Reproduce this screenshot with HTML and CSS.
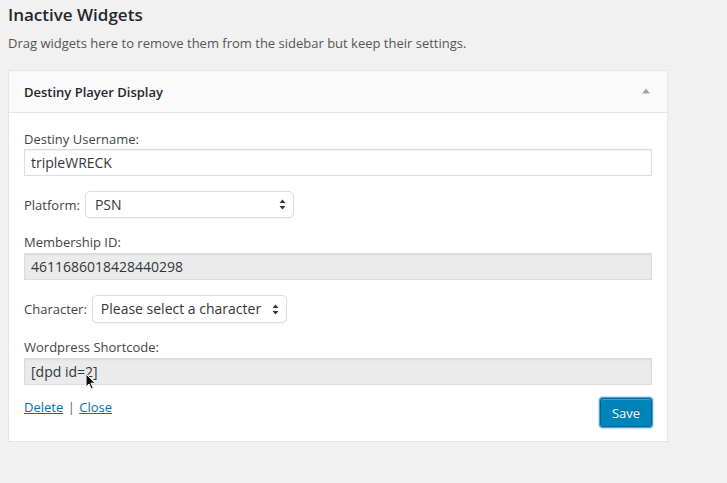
FILE: index.html
```html
<!DOCTYPE html>
<html>
<head>
<meta charset="utf-8">
<link rel="stylesheet" href="styles.css">
</head>
<body>
<div class="page">
  <h2 class="title">Inactive Widgets</h2>
  <p class="desc">Drag widgets here to remove them from the sidebar but keep their settings.</p>
  <div class="widget">
    <div class="widget-top">
      <span class="widget-title">Destiny Player Display</span>
      <svg class="toggle" width="8" height="6" viewBox="0 0 8 6"><path d="M0 5.5 L4 0.5 L8 5.5 Z" fill="#a0a5aa"/></svg>
    </div>
    <div class="widget-inside">
      <div class="field">
        <label class="lbl">Destiny Username:</label>
        <input class="txt" type="text" value="tripleWRECK">
      </div>
      <div class="field row">
        <label class="lbl">Platform:</label>
        <div class="sel sel-platform">
          <span class="sel-text">PSN</span>
          <svg class="updown" width="7" height="11" viewBox="0 0 7 11"><path d="M3.5 0.5 L6.5 4 L0.5 4 Z M3.5 10.5 L6.5 7 L0.5 7 Z" fill="#333"/></svg>
        </div>
      </div>
      <div class="field">
        <label class="lbl">Membership ID:</label>
        <input class="txt ro" type="text" value="4611686018428440298" readonly>
      </div>
      <div class="field row">
        <label class="lbl">Character:</label>
        <div class="sel sel-char">
          <span class="sel-text">Please select a character</span>
          <svg class="updown" width="7" height="11" viewBox="0 0 7 11"><path d="M3.5 0.5 L6.5 4 L0.5 4 Z M3.5 10.5 L6.5 7 L0.5 7 Z" fill="#333"/></svg>
        </div>
      </div>
      <div class="field last">
        <label class="lbl">Wordpress Shortcode:</label>
        <div class="cursor-wrap">
          <input class="txt ro" type="text" value="[dpd id=2]" readonly>
          <svg class="cursor" width="12" height="17" viewBox="0 0 12 17"><path d="M1 1 L1 14 L4 11 L6.3 16 L8.3 15.1 L6 10.2 L10.3 10.2 Z" fill="#111" stroke="#fff" stroke-width="1"/></svg>
        </div>
      </div>
      <div class="actions">
        <div class="links"><a href="#">Delete</a> <span class="sep">|</span> <a href="#">Close</a></div>
        <button class="save">Save</button>
      </div>
    </div>
  </div>
</div>
</body>
</html>
```

FILE: styles.css
```css
html, body {
  margin: 0;
  padding: 0;
  background: #f1f1f1;
}
body {
  font-family: "Open Sans", "Liberation Sans", sans-serif;
  color: #444;
  font-size: 13px;
}
.page {
  padding: 4px 8px 0 8px;
}
.title {
  margin: 0;
  font-size: 17px;
  line-height: 22px;
  font-weight: 600;
  color: #23282d;
}
.desc {
  margin: 8px 0 0 0;
  font-size: 13px;
  line-height: 18px;
  color: #555;
}
.widget {
  margin-top: 18px;
  width: 660px;
  box-sizing: border-box;
  background: #fff;
  border: 1px solid #e5e5e5;
  box-shadow: 0 1px 1px rgba(0,0,0,0.04);
}
.widget-top {
  height: 41px;
  background: #fafafa;
  border-bottom: 1px solid #e5e5e5;
  display: flex;
  align-items: center;
  justify-content: space-between;
  padding: 0 17px 0 15px;
}
.widget-title {
  font-size: 13px;
  font-weight: 600;
  color: #23282d;
  line-height: 18px;
}
.toggle {
  display: block;
  margin-top: -1px;
}
.widget-inside {
  padding: 17px 15px 14px 15px;
}
.field {
  margin-bottom: 15px;
}
.field.last {
  margin-bottom: 13px;
}
.lbl {
  display: block;
  font-size: 13px;
  line-height: 18px;
  color: #444;
}
.txt {
  display: block;
  box-sizing: border-box;
  width: 628px;
  height: 27px;
  margin: 1px 0 0 0;
  padding: 0 6px;
  border: 1px solid #ddd;
  background: #fff;
  box-shadow: inset 0 1px 2px rgba(0,0,0,0.07);
  font-family: "Open Sans", "Liberation Sans", sans-serif;
  font-size: 14px;
  color: #32373c;
  outline: none;
  border-radius: 0;
}
.txt.ro {
  background: #ebebeb;
  border-color: #dcdcdc;
  margin-top: 2px;
}
.row {
  display: flex;
  align-items: center;
}
.row .lbl {
  display: inline;
  margin-right: 5px;
}
.sel {
  position: relative;
  box-sizing: border-box;
  height: 27px;
  border: 1px solid #ddd;
  border-radius: 5px;
  background: #fff;
  box-shadow: 0 1px 1px rgba(0,0,0,0.04);
  display: flex;
  align-items: center;
  padding-left: 9px;
}
.sel-platform {
  width: 209px;
}
.sel-char {
  width: 195px;
  height: 28px;
  padding-left: 8px;
}
.sel-text {
  font-size: 14px;
  color: #32373c;
  line-height: 18px;
}
.updown {
  position: absolute;
  right: 7px;
  top: 7px;
}
.sel-char .updown {
  top: 8px;
}
.cursor-wrap {
  position: relative;
}
.cursor {
  position: absolute;
  left: 61px;
  top: 15px;
}
.actions {
  display: flex;
  justify-content: space-between;
  align-items: flex-start;
}
.links {
  font-size: 13px;
  line-height: 18px;
  color: #666;
  padding-left: 0;
}
.links a {
  color: #0073aa;
  text-decoration: underline;
}
.sep {
  color: #666;
  margin: 0 1px;
}
.save {
  box-sizing: border-box;
  width: 52px;
  height: 29px;
  background: #0085ba;
  border: 1px solid #006799;
  border-radius: 3px;
  box-shadow: 0 0 0 1px #5b9dd9, 0 0 2px 1px rgba(30,140,190,0.8), inset 0 1px 0 rgba(120,200,230,0.5);
  color: #fff;
  font-family: "Open Sans", "Liberation Sans", sans-serif;
  font-size: 13px;
  padding: 0;
  margin-right: 0;
  text-shadow: 0 -1px 1px #006799;
}
```
